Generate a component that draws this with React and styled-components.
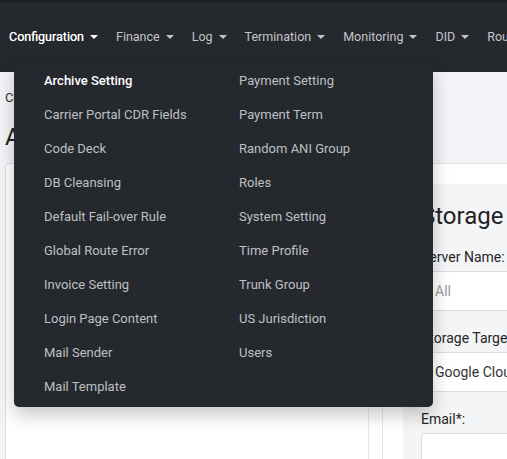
import React from "react";
import styled, { createGlobalStyle } from "styled-components";

const Global = createGlobalStyle`
  html, body {
    margin: 0;
    padding: 0;
    width: 507px;
    height: 459px;
    overflow: hidden;
    background: #f2f4f7;
    font-family: Roboto, "Liberation Sans", Arial, sans-serif;
  }
  * { box-sizing: border-box; }
`

const Header = styled.header`
  position: relative;
  height: 72px;
  padding-bottom: 2px;
  background: #25282d;
  border-top: 2px solid #1d1f23;
  z-index: 5;
`
const NavList = styled.nav`
  display: flex;
  align-items: center;
  height: 100%;
  padding-left: 9px;
  gap: 18px;
  white-space: nowrap;
  overflow: hidden;
`
const NavItem = styled.div`
  display: flex;
  align-items: center;
  font-size: 12.5px;
  color: ${p => (p.$active ? "#ffffff" : "#c3c5c9")};
  text-shadow: ${p => (p.$active ? "0 0 0.3px #fff" : "none")};
`
const Caret = styled.span`
  display: inline-block;
  margin-left: 6px;
  margin-top: 2px;
  width: 0;
  height: 0;
  border-left: 4px solid transparent;
  border-right: 4px solid transparent;
  border-top: 4px solid currentColor;
`
const Dropdown = styled.div`
  position: absolute;
  top: 61px;
  left: 14px;
  width: 419px;
  padding: 8px 0 10px 30px;
  background: #25282d;
  border-radius: 0 0 5px 5px;
  box-shadow: 0 8px 18px rgba(0, 0, 0, 0.22);
  display: grid;
  grid-template-columns: 195px 1fr;
  grid-auto-flow: column;
  grid-template-rows: repeat(10, 20px);
  row-gap: 14px;
`
const MenuLink = styled.div`
  font-size: 13px;
  line-height: 20px;
  font-weight: ${p => (p.$active ? 500 : 400)};
  color: ${p => (p.$active ? "#ffffff" : "#bdc0c4")};
  white-space: nowrap;
`

const Content = styled.main`
  padding: 17px 0 0 5px;
`
const Breadcrumb = styled.div`
  font-size: 13px;
  line-height: 18px;
  color: #333;
`
const Title = styled.h1`
  margin: 15px 0 11px;
  font-size: 24px;
  line-height: 30px;
  font-weight: 400;
  color: #222;
`
const Panel = styled.section`
  display: flex;
  min-height: 320px;
  background: #ffffff;
  border: 1px solid #dee2e6;
  border-right: none;
  border-radius: 5px 0 0 0;
`
const LeftCol = styled.div`
  width: 363px;
  flex-shrink: 0;
  border-right: 1px solid #e4e7eb;
`
const Divider = styled.div`
  width: 14px;
  flex-shrink: 0;
  border-right: 1px solid #e4e7eb;
`
const RightCard = styled.div`
  flex: 1;
  margin: 20px 0 0 20px;
  padding: 18px 0 0 18px;
  background: #f4f5f7;
  border-radius: 4px 0 0 0;
  white-space: nowrap;
  overflow: hidden;
`
const CardTitle = styled.h2`
  margin: 0 0 18px;
  font-size: 24px;
  line-height: 28px;
  font-weight: 400;
  color: #222;
`
const Field = styled.div`
  margin-bottom: 18px;
`
const Label = styled.div`
  font-size: 14px;
  line-height: 18px;
  color: #262626;
  margin-bottom: 5px;
`
const Input = styled.div`
  height: 40px;
  display: flex;
  align-items: center;
  padding-left: 13px;
  background: #fff;
  border: 1px solid #d9dde2;
  border-right: none;
  border-radius: 4px 0 0 4px;
  font-size: 14px;
  color: ${p => (p.$placeholder ? "#9a9da1" : "#333")};
`

const navItems = ["Configuration", "Finance", "Log", "Termination", "Monitoring", "DID", "Routing"];
const menuItems = [
  "Archive Setting", "Carrier Portal CDR Fields", "Code Deck", "DB Cleansing",
  "Default Fail-over Rule", "Global Route Error", "Invoice Setting", "Login Page Content",
  "Mail Sender", "Mail Template",
  "Payment Setting", "Payment Term", "Random ANI Group", "Roles", "System Setting",
  "Time Profile", "Trunk Group", "US Jurisdiction", "Users",
];

export default function App() {
  return (
    <>
      <Global />
      <Header>
        <NavList>
          {navItems.map((n, i) => (
            <NavItem key={n} $active={i === 0}>
              {n}
              <Caret />
            </NavItem>
          ))}
        </NavList>
        <Dropdown>
          {menuItems.map((m, i) => (
            <MenuLink key={m} $active={i === 0}>{m}</MenuLink>
          ))}
        </Dropdown>
      </Header>
      <Content>
        <Breadcrumb>Configuration / Archive Setting</Breadcrumb>
        <Title>Archive Setting</Title>
        <Panel>
          <LeftCol />
          <Divider />
          <RightCard>
            <CardTitle>Storage</CardTitle>
            <Field>
              <Label>Server Name:</Label>
              <Input $placeholder>All</Input>
            </Field>
            <Field>
              <Label>Storage Target:</Label>
              <Input>Google Cloud Storage</Input>
            </Field>
            <Field>
              <Label>Email*:</Label>
              <Input />
            </Field>
          </RightCard>
        </Panel>
      </Content>
    </>
  );
}
